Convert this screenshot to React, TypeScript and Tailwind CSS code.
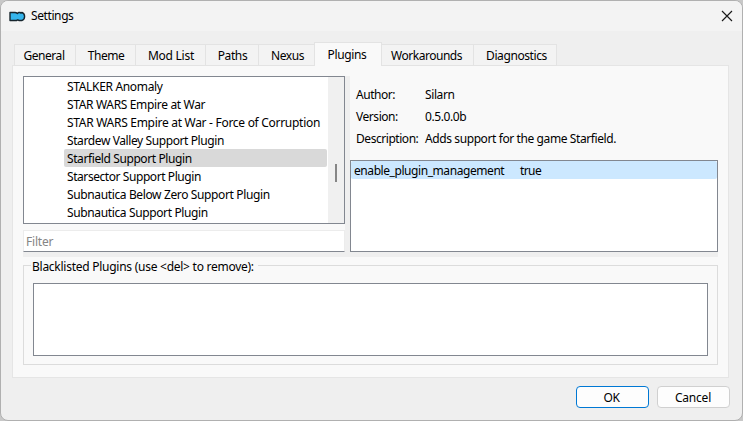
const tabs = [
  { name: 'General', cls: 'w-[62px] pr-0.5 tracking-[-0.45px]' },
  { name: 'Theme', cls: 'w-[61px] pl-px tracking-[-0.5px]' },
  { name: 'Mod List', cls: 'w-[71px] pl-px tracking-[-0.25px]' },
  { name: 'Paths', cls: 'w-[54px] pl-px tracking-[-0.4px]' },
  { name: 'Nexus', cls: 'w-[57px] pl-0.5 tracking-[-0.4px]' },
  { name: 'Plugins', cls: 'w-[68px] pr-0.5 tracking-[-0.35px]' },
  { name: 'Workarounds', cls: 'w-[93px] pr-0.5 tracking-[-0.47px]' },
  { name: 'Diagnostics', cls: 'w-[84px] pl-[3px] tracking-[-0.4px]' },
];

const plugins = [
  { name: 'STALKER Anomaly', cls: 'tracking-[-0.33px]' },
  { name: 'STAR WARS Empire at War', cls: 'tracking-[-0.34px]' },
  { name: 'STAR WARS Empire at War - Force of Corruption', cls: 'tracking-[-0.29px]' },
  { name: 'Stardew Valley Support Plugin', cls: 'tracking-[-0.4px]' },
  { name: 'Starfield Support Plugin', cls: 'tracking-[-0.4px]' },
  { name: 'Starsector Support Plugin', cls: 'tracking-[-0.43px]' },
  { name: 'Subnautica Below Zero Support Plugin', cls: 'tracking-[-0.37px]' },
  { name: 'Subnautica Support Plugin', cls: 'tracking-[-0.37px]' },
];

const details = [
  { label: 'Author:', value: 'Silarn' },
  { label: 'Version:', value: '0.5.0.0b' },
  { label: 'Description:', value: 'Adds support for the game Starfield.' },
];

function TitleBar() {
  return (
    <header className="flex h-[30px] shrink-0 items-center bg-[#f3f3f3] pr-[9px] pl-2">
      <svg width="17" height="11" viewBox="0 0 17 11" className="shrink-0">
        <path
          d="M1 1.5H6Q7.4 1.5 8.4 2.6L9.6 1.5H11L12 2L13 1.5Q15.6 2.4 15.6 5.4Q15.6 8.6 12.8 9.5H10.2L8.8 8.8L7.4 9.5H1Z"
          fill="#35b5ec"
          stroke="#17252d"
          strokeWidth="1.4"
          strokeLinejoin="round"
        />
      </svg>
      <h1 className="ml-[5px] tracking-[-0.4px]">Settings</h1>
      <svg width="12" height="12" viewBox="0 0 12 12" className="ml-auto shrink-0">
        <path d="M1 1L11 11M11 1L1 11" stroke="#1a1a1a" strokeWidth="1.15" />
      </svg>
    </header>
  );
}

function Tabs() {
  return (
    <nav className="relative z-10 -mb-px flex h-6 items-end pl-0.5">
      {tabs.map((tab, i) => {
        const selected = tab.name === 'Plugins';
        return (
          <button
            key={tab.name}
            className={`flex shrink-0 items-center justify-center border border-[#e3e3e3] whitespace-nowrap ${i ? '-ml-px' : ''} ${
              selected ? 'z-10 h-6 border-b-0 bg-[#f9f9f9] pt-px' : 'h-[22px] bg-[#f3f3f3] pt-0.5'
            } ${tab.cls}`}
          >
            {tab.name}
          </button>
        );
      })}
    </nav>
  );
}

function PluginList() {
  return (
    <div className="flex w-[322px] flex-col">
      <div className="flex h-[148px] border border-[#828790] bg-white">
        <ul className="flex-1 pl-10">
          {plugins.map((p) => (
            <li
              key={p.name}
              className={`mr-px h-[18px] rounded-[2px] pl-[3px] leading-[20px] whitespace-nowrap ${p.cls} ${
                p.name === 'Starfield Support Plugin' ? 'bg-[#d9d9d9]' : ''
              }`}
            >
              {p.name}
            </li>
          ))}
        </ul>
        <div className="w-4 shrink-0 bg-[#f0f0f0] pt-[87px] pl-[7px]">
          <div className="h-[18px] w-0.5 bg-[#868686]" />
        </div>
      </div>
      <div className="mt-1.5 flex h-[22px] items-center border border-[#ececec] border-b-[#828790] bg-white pt-0.5 pl-0.5 tracking-[-0.2px] text-[#858585]">
        Filter
      </div>
    </div>
  );
}

function PluginDetails() {
  return (
    <div className="flex w-[368px] flex-col">
      <dl className="flex h-[84px] flex-col pt-2 pl-1.5">
        {details.map((d) => (
          <div key={d.label} className="flex h-[22px] items-center whitespace-nowrap">
            <dt className="w-[69px] tracking-[-0.45px]">{d.label}</dt>
            <dd className="tracking-[-0.4px]">{d.value}</dd>
          </div>
        ))}
      </dl>
      <div className="h-[92px] border border-[#828790] bg-white">
        <div className="flex h-[18px] items-center rounded-[2px] bg-[#cce8ff] pt-0.5 pl-[3px]">
          <span className="w-[166px] tracking-[-0.43px]">enable_plugin_management</span>
          <span className="tracking-[-0.6px]">true</span>
        </div>
      </div>
    </div>
  );
}

export default function App() {
  return (
    <div className="h-[421px] w-[743px] bg-[#c8c8c8] font-['Noto_Sans','Open_Sans',sans-serif] text-[12px] leading-4 text-black">
      <div className="flex h-full flex-col overflow-hidden rounded-lg border border-[#b0b0b0] bg-[#efefef]">
        <TitleBar />
        <main className="mt-[11px] ml-[11px] w-[717px]">
          <Tabs />
          <section className="h-[313px] border border-[#e5e5e5] bg-[#f9f9f9] px-2.5 pt-2.5">
            <div className="flex w-[695px] border-b-[5px] border-[#efefef]">
              <PluginList />
              <div className="w-[5px] bg-[#efefef]" />
              <PluginDetails />
            </div>
            <fieldset className="h-[108px] w-[695px] border border-[#dcdcdc] px-[9px]">
              <legend className="-ml-0.5 h-4 pr-1 pl-px leading-[19px] tracking-[-0.26px] whitespace-nowrap">
                Blacklisted Plugins (use &lt;del&gt; to remove):
              </legend>
              <div className="mt-2.5 h-[73px] border border-[#828790] bg-white" />
            </fieldset>
          </section>
          <footer className="mt-2 flex justify-end gap-2">
            <button className="h-[22px] w-[73px] rounded-[4px] border border-[#0078d4] bg-[#fdfdfd] pt-0.5 pr-0.5 tracking-[-0.3px]">
              OK
            </button>
            <button className="-mr-px h-[22px] w-[73px] rounded-[4px] border border-[#d0d0d0] bg-[#fdfdfd] pt-0.5 pr-px tracking-[-0.2px]">
              Cancel
            </button>
          </footer>
        </main>
      </div>
    </div>
  );
}
